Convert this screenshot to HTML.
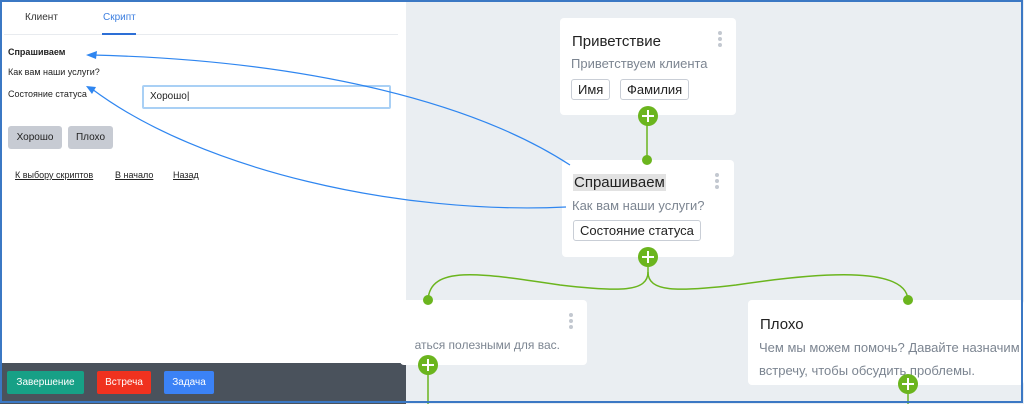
<!DOCTYPE html>
<html><head><meta charset="utf-8"><style>
*{margin:0;padding:0;box-sizing:border-box}
body{width:1024px;height:404px;overflow:hidden;background:#eaeef2;font-family:"Liberation Sans","Noto Sans CJK SC",sans-serif;position:relative}
.a{position:absolute;white-space:nowrap}
.card{position:absolute;background:#fff;border-radius:4px}
.tag{position:absolute;border:1px solid #c9ced6;border-radius:3px;background:#fff;font-size:13px;color:#222;padding:0 6px;line-height:18px}
.dots{position:absolute;width:4px}
.dots i{display:block;width:4px;height:4px;border-radius:2px;background:#c3c8d0;margin-bottom:2px}
</style></head><body>
<div class="a" style="left:0;top:0;width:406px;height:404px;background:#fff"></div>
<div class="a" style="left:25px;top:12px;font-size:10px;color:#333">Клиент</div>
<div class="a" style="left:103px;top:12px;font-size:10px;color:#3d7fe0">Скрипт</div>
<div class="a" style="left:4px;top:34px;width:394px;height:1px;background:#e8ebef"></div>
<div class="a" style="left:102px;top:33px;width:34px;height:2px;background:#2d6fd6"></div>
<div class="a" style="left:8px;top:47px;font-size:9px;font-weight:bold;color:#222">Спрашиваем</div>
<div class="a" style="left:8px;top:67px;font-size:9px;color:#222">Как вам наши услуги?</div>
<div class="a" style="left:8px;top:89px;font-size:9px;color:#222">Состояние статуса</div>
<div class="a" style="left:142px;top:85px;width:249px;height:24px;border:2px solid #a9d0f5;border-radius:2px;font-size:10px;color:#222;padding:4px 6px">Хорошо|</div>
<div class="a" style="left:8px;top:126px;width:54px;height:23px;background:#c7cbd3;border-radius:3px;font-size:10px;color:#222;text-align:center;line-height:23px">Хорошо</div>
<div class="a" style="left:68px;top:126px;width:45px;height:23px;background:#c7cbd3;border-radius:3px;font-size:10px;color:#222;text-align:center;line-height:23px">Плохо</div>
<div class="a" style="left:15px;top:170px;font-size:9px;color:#222;text-decoration:underline">К выбору скриптов</div>
<div class="a" style="left:115px;top:170px;font-size:9px;color:#222;text-decoration:underline">В начало</div>
<div class="a" style="left:173px;top:170px;font-size:9px;color:#222;text-decoration:underline">Назад</div>
<div class="a" style="left:0;top:363px;width:406px;height:41px;background:#4a525c"></div>
<div class="a" style="left:7px;top:371px;width:77px;height:23px;background:#17a086;border-radius:2px;color:#fff;font-size:10px;text-align:center;line-height:23px">Завершение</div>
<div class="a" style="left:97px;top:371px;width:54px;height:23px;background:#f0321f;border-radius:2px;color:#fff;font-size:10px;text-align:center;line-height:23px">Встреча</div>
<div class="a" style="left:164px;top:371px;width:50px;height:23px;background:#3b82f6;border-radius:2px;color:#fff;font-size:10px;text-align:center;line-height:23px">Задача</div>

<div class="card" style="left:560px;top:18px;width:176px;height:97px"></div>
<div class="a" style="left:572px;top:33px;font-size:15px;color:#222">Приветствие</div>
<div class="a" style="left:571px;top:56px;font-size:13px;color:#7c8591">Приветствуем клиента</div>
<div class="tag" style="left:571px;top:79px;height:21px;line-height:19px">Имя</div>
<div class="tag" style="left:620px;top:79px;height:21px;line-height:19px">Фамилия</div>
<div class="dots" style="left:718px;top:31px"><i></i><i></i><i></i></div>

<div class="card" style="left:562px;top:160px;width:172px;height:97px"></div>
<div class="a" style="left:573px;top:174px;font-size:15px;color:#222;background:#e2e2e2;padding:0 1px">Спрашиваем</div>
<div class="a" style="left:572px;top:198px;font-size:13px;color:#7c8591">Как вам наши услуги?</div>
<div class="tag" style="left:573px;top:220px;height:21px;line-height:19px">Состояние статуса</div>
<div class="dots" style="left:715px;top:173px"><i></i><i></i><i></i></div>

<div class="card" style="left:400px;top:300px;width:187px;height:65px"></div>
<div class="a" style="left:390px;top:338px;font-size:12px;color:#7c8591;width:170px;overflow:hidden;text-align:right;direction:ltr">аться полезными для вас.</div>
<div class="dots" style="left:569px;top:313px"><i></i><i></i><i></i></div>

<div class="card" style="left:748px;top:300px;width:276px;height:85px"></div>
<div class="a" style="left:760px;top:316px;font-size:15px;color:#222">Плохо</div>
<div class="a" style="left:759px;top:336px;font-size:13px;color:#7c8591;line-height:23px">Чем мы можем помочь? Давайте назначим<br>встречу, чтобы обсудить проблемы.</div>

<div class="a" style="left:0;top:300px;width:406px;height:63px;background:#fff"></div>
<svg class="a" style="left:0;top:0" width="1024" height="404">
 <g stroke="#6bb51e" stroke-width="1.5" fill="none">
  <path d="M647 116 V160"/>
  <path d="M648 257 V272 C648 292 620 292 560 285 C480 273 430 265 428 300"/>
  <path d="M648 272 C648 292 676 292 736 285 C816 273 906 265 908 300"/>
  <path d="M428 365 V404"/><path d="M908 384 V404"/>
 </g>
 <g fill="#6bb51e">
  <circle cx="647" cy="160" r="5"/><circle cx="428" cy="300" r="5"/><circle cx="908" cy="300" r="5"/>
 </g>
 <g>
  <circle cx="648" cy="116" r="10" fill="#6bb51e"/><path d="M642 116h12M648 110v12" stroke="#fff" stroke-width="2"/>
  <circle cx="648" cy="257" r="10" fill="#6bb51e"/><path d="M642 257h12M648 251v12" stroke="#fff" stroke-width="2"/>
  <circle cx="428" cy="365" r="10" fill="#6bb51e"/><path d="M422 365h12M428 359v12" stroke="#fff" stroke-width="2"/>
  <circle cx="908" cy="384" r="10" fill="#6bb51e"/><path d="M902 384h12M908 378v12" stroke="#fff" stroke-width="2"/>
 </g>
 <g stroke="#2f86f0" stroke-width="1.2" fill="none">
  <path d="M570 165 C470 100 300 60 92 55"/>
  <path d="M566 207 C400 215 200 170 92 89"/>
 </g>
 <g fill="#2f86f0">
  <path d="M86 55 L97 51 L96 59 Z"/>
  <path d="M86 86 L96 87 L92 94 Z"/>
 </g>
 <rect x="1" y="1" width="1021" height="401" fill="none" stroke="#3b78c4" stroke-width="2"/>
</svg>
</body></html>
